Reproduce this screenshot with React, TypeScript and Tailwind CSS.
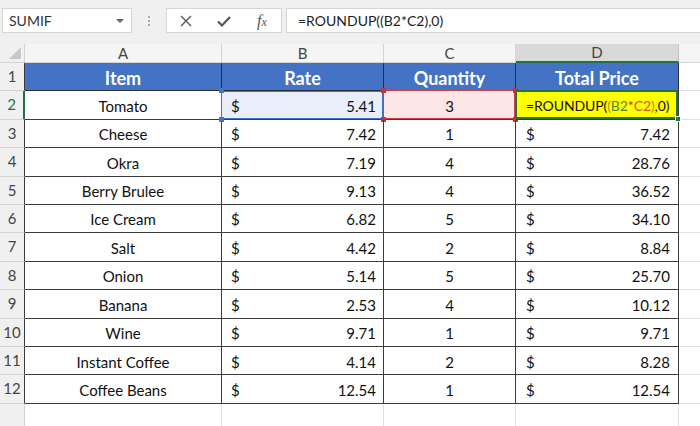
import React from 'react';

const font = { fontFamily: 'Lato, "Liberation Sans", sans-serif' };

const rows: [string, string, number, string][] = [
  ['Tomato', '5.41', 3, ''],
  ['Cheese', '7.42', 1, '7.42'],
  ['Okra', '7.19', 4, '28.76'],
  ['Berry Brulee', '9.13', 4, '36.52'],
  ['Ice Cream', '6.82', 5, '34.10'],
  ['Salt', '4.42', 2, '8.84'],
  ['Onion', '5.14', 5, '25.70'],
  ['Banana', '2.53', 4, '10.12'],
  ['Wine', '9.71', 1, '9.71'],
  ['Instant Coffee', '4.14', 2, '8.28'],
  ['Coffee Beans', '12.54', 1, '12.54'],
];

const Handle = ({ className }: { className: string }) => (
  <div className={`absolute w-[5px] h-[5px] ${className}`} />
);

const Formula = () => (
  <span className="text-[14px] tracking-[-0.1px]">
    =ROUNDUP(<span className="text-[#c98a00]">(</span>
    <span className="text-[#4f8a2c]">B2</span>
    <span className="text-[#c0392b]">*</span>
    <span className="text-[#d0562b]">C2</span>
    <span className="text-[#c98a00]">)</span>,0)
  </span>
);

export default function App() {
  const rowHead = 'flex items-end justify-center pb-[3px] text-[15px] text-[#444] bg-[#f0f0f0] border-b border-[#d4d4d4]';
  const cell = 'border-r border-b border-[#3c3c3c] text-[15px] text-[#111]';

  return (
    <div className="w-[700px] h-[426px] overflow-hidden bg-[#f0f0f0] flex flex-col" style={font}>
      {/* Formula bar */}
      <div className="h-[38px] flex items-start pt-[8px]">
        <div className="ml-[2px] w-[130px] h-[25px] bg-white border border-[#d6d6d6] flex items-center justify-between pl-[6px] pr-[7px]">
          <span className="text-[14px] text-[#333]">SUMIF</span>
          <span className="w-0 h-0 border-l-[4px] border-r-[4px] border-t-[4px] border-l-transparent border-r-transparent border-t-[#666]" />
        </div>
        <div className="w-[34px] h-[25px] flex flex-col items-center justify-center gap-[2px]">
          <span className="w-[2px] h-[2px] bg-[#aaa]" />
          <span className="w-[2px] h-[2px] bg-[#aaa]" />
          <span className="w-[2px] h-[2px] bg-[#aaa]" />
        </div>
        <div className="w-[116px] h-[25px] bg-white border border-[#d6d6d6] flex items-center">
          <div className="w-[38px] flex justify-center">
            <svg width="14" height="14" viewBox="0 0 14 14" stroke="#555" strokeWidth="1.4" fill="none">
              <path d="M2 2 L12 12 M12 2 L2 12" />
            </svg>
          </div>
          <div className="w-[38px] flex justify-center">
            <svg width="16" height="14" viewBox="0 0 16 14" stroke="#555" strokeWidth="2.2" fill="none">
              <path d="M2 7.5 L6 11.5 L14 3" />
            </svg>
          </div>
          <div className="w-[38px] flex justify-center">
            <span className="text-[16px] italic text-[#555]" style={{ fontFamily: '"Liberation Serif", serif' }}>
              f<span className="text-[12px]">x</span>
            </span>
          </div>
        </div>
        <div className="ml-[4px] flex-1 h-[25px] bg-white border-y border-l border-[#d6d6d6] flex items-center pl-[11px]">
          <span className="text-[14px] text-[#222]">=ROUNDUP((B2*C2),0)</span>
        </div>
      </div>
      <div className="h-[6px]" />

      {/* Sheet */}
      <div className="flex-1 grid grid-cols-[25px_197px_162px_132px_163px_1fr] grid-rows-[19px_repeat(12,28.42px)_1fr] bg-white">
        {/* Column headers */}
        <div className="relative bg-[#f0f0f0] border-r border-b border-[#d4d4d4]">
          <div className="absolute right-[3px] bottom-[3px] w-0 h-0" style={{ borderBottom: '12px solid #c8c8c8', borderLeft: '12px solid transparent' }} />
        </div>
        {['A', 'B', 'C'].map((c) => (
          <div key={c} className="flex items-center justify-center text-[15px] text-[#444] bg-[#f5f5f5] border-r border-b border-[#d4d4d4]">
            {c}
          </div>
        ))}
        <div className="flex items-center justify-center text-[15px] text-[#444] bg-[#d9d9d9] border-r border-[#c4c4c4] border-b-2 border-b-[#217346]">
          D
        </div>
        <div className="bg-[#f5f5f5] border-b border-[#d4d4d4]" />

        {/* Row 1 */}
        <div className={`${rowHead} border-r border-r-[#3c3c3c]`}>1</div>
        {['Item', 'Rate', 'Quantity', 'Total Price'].map((h) => (
          <div key={h} className="flex items-center justify-center pt-[4px] bg-[#4472c4] text-white font-bold text-[18px] border-r border-b border-[#2f2f2f]">
            {h}
          </div>
        ))}
        <div className="border-b border-[#e1e1e1]" />

        {rows.map(([item, rate, qty, total], i) => {
          const n = i + 2;
          const sel = n === 2;
          return (
            <React.Fragment key={item}>
              <div className={`${rowHead} ${sel ? 'bg-[#dcdcdc] text-[#217346] border-r-2 border-r-[#217346]' : 'border-r border-r-[#3c3c3c]'}`}>{n}</div>
              <div className={`${cell} flex items-center justify-center pt-[2px]`}>{item}</div>
              <div className={`${cell} relative flex items-center justify-between pl-[9px] pr-[7px] pt-[2px] ${sel ? 'bg-[#e8effa]' : ''}`}>
                <span>$</span>
                <span>{rate}</span>
                {sel && (
                  <>
                    <div className="absolute inset-0 -left-px border border-[#4472c4]" />
                    <Handle className="-left-[3px] -top-[3px] bg-[#4472c4]" />
                    <Handle className="-left-[3px] -bottom-[3px] bg-[#4472c4]" />
                  </>
                )}
              </div>
              <div className={`${cell} relative flex items-center justify-center pt-[2px] ${sel ? 'bg-[#fde6e6]' : ''}`}>
                {qty}
                {sel && (
                  <>
                    <div className="absolute -left-px -top-px right-0 bottom-0 border border-[#d13f46]" />
                    <Handle className="-left-[3px] -top-[3px] bg-[#c8323a]" />
                    <Handle className="-left-[3px] -bottom-[3px] bg-[#c8323a]" />
                    <Handle className="-right-[3px] -top-[3px] bg-[#c8323a]" />
                    <Handle className="-right-[3px] -bottom-[3px] bg-[#c8323a]" />
                  </>
                )}
              </div>
              {sel ? (
                <div className={`${cell} relative flex items-center pl-[10px] pt-[1px] bg-[#ffff00]`}>
                  <Formula />
                  <div className="absolute -left-px -top-px right-0 bottom-0 border-2 border-[#217346]" />
                  <div className="absolute -right-[3px] -bottom-[3px] w-[6px] h-[6px] bg-[#217346] border border-white" />
                </div>
              ) : (
                <div className={`${cell} flex items-center justify-between pl-[10px] pr-[8px] pt-[2px]`}>
                  <span>$</span>
                  <span>{total}</span>
                </div>
              )}
              <div className="border-b border-[#e1e1e1]" />
            </React.Fragment>
          );
        })}

        {/* Row 13 */}
        <div className="bg-[#f0f0f0] border-r border-[#d4d4d4]" />
        <div className="border-r border-[#e1e1e1]" />
        <div className="border-r border-[#e1e1e1]" />
        <div className="border-r border-[#e1e1e1]" />
        <div className="border-r border-[#e1e1e1]" />
        <div />
      </div>
    </div>
  );
}
